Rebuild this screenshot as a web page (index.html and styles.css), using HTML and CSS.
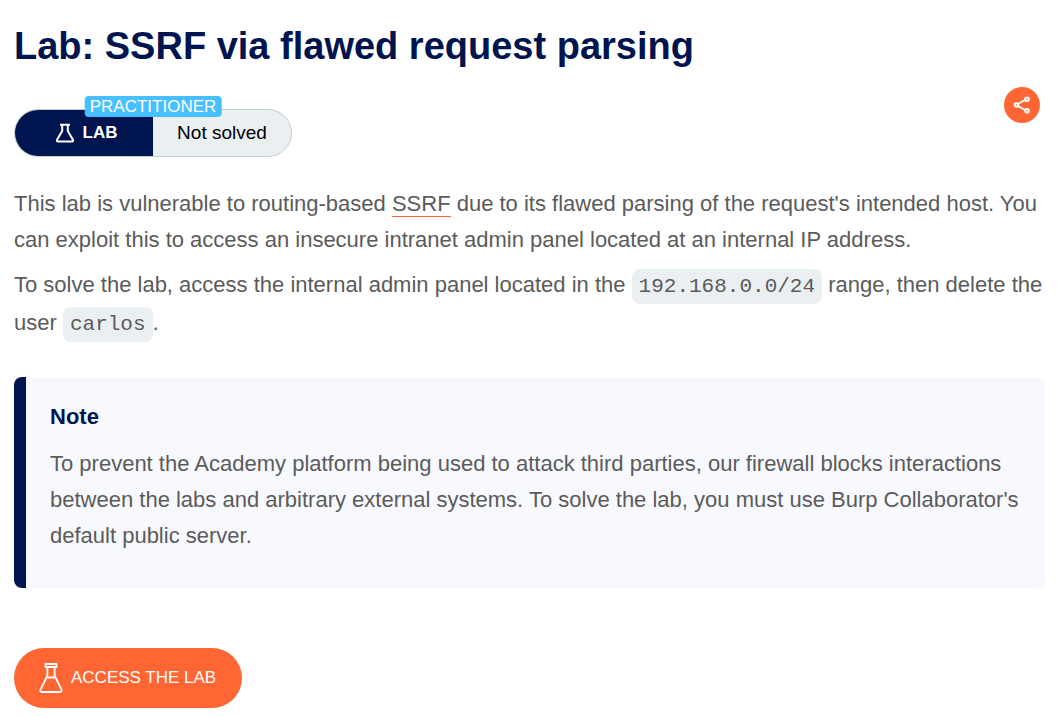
FILE: index.html
```html
<!DOCTYPE html>
<html lang="en">
<head>
<meta charset="utf-8">
<title>Lab: SSRF via flawed request parsing</title>
<link rel="stylesheet" href="styles.css">
</head>
<body>
<main class="page">
  <h1 class="title">Lab: SSRF via flawed request parsing</h1>
  <div class="meta">
    <div class="status">
      <span class="status-level">PRACTITIONER</span>
      <span class="status-type">
        <svg class="icon-flask" viewBox="0 0 20 20" fill="none" stroke="currentColor" stroke-width="2" stroke-linejoin="round" aria-hidden="true"><path d="M5 1.8h10M7.2 2v6L2.2 16.5Q1.200 18.400 3.200 18.400H16.800Q18.800 18.400 17.800 16.500L12.800 8V2"/></svg>
        LAB
      </span>
      <span class="status-state">Not solved</span>
    </div>
    <button class="share" type="button" aria-label="Share">
      <svg class="icon-share" viewBox="0 0 18 18" fill="none" stroke="currentColor" stroke-width="2" aria-hidden="true"><path d="M4.800 8 12 4M4.800 10 12 14"/><circle cx="3.500" cy="9" r="1.800"/><circle cx="14" cy="3.200" r="1.800"/><circle cx="14" cy="14.800" r="1.800"/></svg>
    </button>
  </div>
  <div class="content">
    <p class="text">This lab is vulnerable to routing-based <a class="link" href="#ssrf">SSRF</a> due to its flawed parsing of the request's intended host. You can exploit this to access an insecure intranet admin panel located at an internal IP address.</p>
    <p class="text">To solve the lab, access the internal admin panel located in the <code class="code">192.168.0.0/24</code> range, then delete the user <code class="code">carlos</code>.</p>
  </div>
  <section class="note">
    <h2 class="note-title">Note</h2>
    <p class="text">To prevent the Academy platform being used to attack third parties, our firewall blocks interactions between the labs and arbitrary external systems. To solve the lab, you must use Burp Collaborator's default public server.</p>
  </section>
  <a class="access" href="#lab">
    <svg class="icon-access" viewBox="0 0 24 30" fill="none" stroke="currentColor" stroke-width="1.800" stroke-linejoin="round" aria-hidden="true"><path d="M6.500 1h11V4H6.500ZM8.400 4v8.500L1.600 26.300Q.600 29 3 29H21Q23.400 29 22.400 26.300L15.600 12.500V4M7.600 14.500h8.800"/></svg>
    ACCESS THE LAB
  </a>
</main>
</body>
</html>
```
FILE: styles.css
```css
body {
  margin: 0;
  background: #fff;
  color: #5b5b5b;
  font-family: "Liberation Sans", Arial, sans-serif;
  font-size: 22px;
}
.page {
  padding: 22px 15px 9px 14px;
}
.title {
  margin: 0;
  color: #00144f;
  font-size: 38px;
  line-height: 48px;
}
.meta {
  display: flex;
  align-items: flex-start;
  justify-content: space-between;
  margin-top: 17px;
  padding-right: 5px;
}
.status {
  position: relative;
  display: grid;
  grid-template-columns: 1fr 1fr;
  box-sizing: border-box;
  width: 278px;
  height: 48px;
  margin-top: 22px;
  border: 1px solid #c9cfd1;
  border-radius: 24px;
  background: #eaeff2;
}
.status-level {
  position: absolute;
  top: -14px;
  left: 50%;
  transform: translateX(-50%);
  padding: 0 5px;
  border-radius: 4px;
  background: #48bfff;
  color: #fff;
  font-size: 17px;
  line-height: 21px;
}
.status-type,
.status-state {
  display: flex;
  align-items: center;
  justify-content: center;
}
.status-type {
  gap: 8px;
  padding-left: 4px;
  border-radius: 23px 0 0 23px;
  background: #00144f;
  color: #fff;
  font-size: 17px;
  font-weight: bold;
}
.status-state {
  color: #000;
  font-size: 19px;
}
.icon-flask {
  width: 20px;
  height: 20px;
}
.share {
  display: flex;
  align-items: center;
  justify-content: center;
  width: 36px;
  height: 36px;
  padding: 0;
  border: 0;
  border-radius: 50%;
  background: #ff6633;
  color: #fff;
}
.icon-share {
  width: 18px;
  height: 18px;
}
.content {
  display: grid;
  gap: 9px;
  margin-top: 29px;
}
.text {
  margin: 0;
  line-height: 36px;
}
.link {
  border-bottom: 1px solid #ff6633;
  color: inherit;
  text-decoration: none;
}
.code {
  padding: 6px 7px;
  border-radius: 8px;
  background: #eaeff2;
  font-family: "Liberation Mono", "Courier New", monospace;
  font-size: 21px;
}
.note {
  margin-top: 34px;
  padding: 22px 24px 34px;
  border-left: 12px solid #00144f;
  border-radius: 8px;
  background: #f8f9fe;
}
.note-title {
  margin: 0 0 11px;
  color: #00144f;
  font-size: 22px;
  line-height: 36px;
}
.access {
  display: inline-flex;
  align-items: center;
  gap: 8px;
  height: 60px;
  margin-top: 60px;
  padding: 0 26px 0 25px;
  border-radius: 30px;
  background: #ff6633;
  color: #fff;
  font-size: 17px;
  text-decoration: none;
}
.icon-access {
  width: 24px;
  height: 30px;
}
```
